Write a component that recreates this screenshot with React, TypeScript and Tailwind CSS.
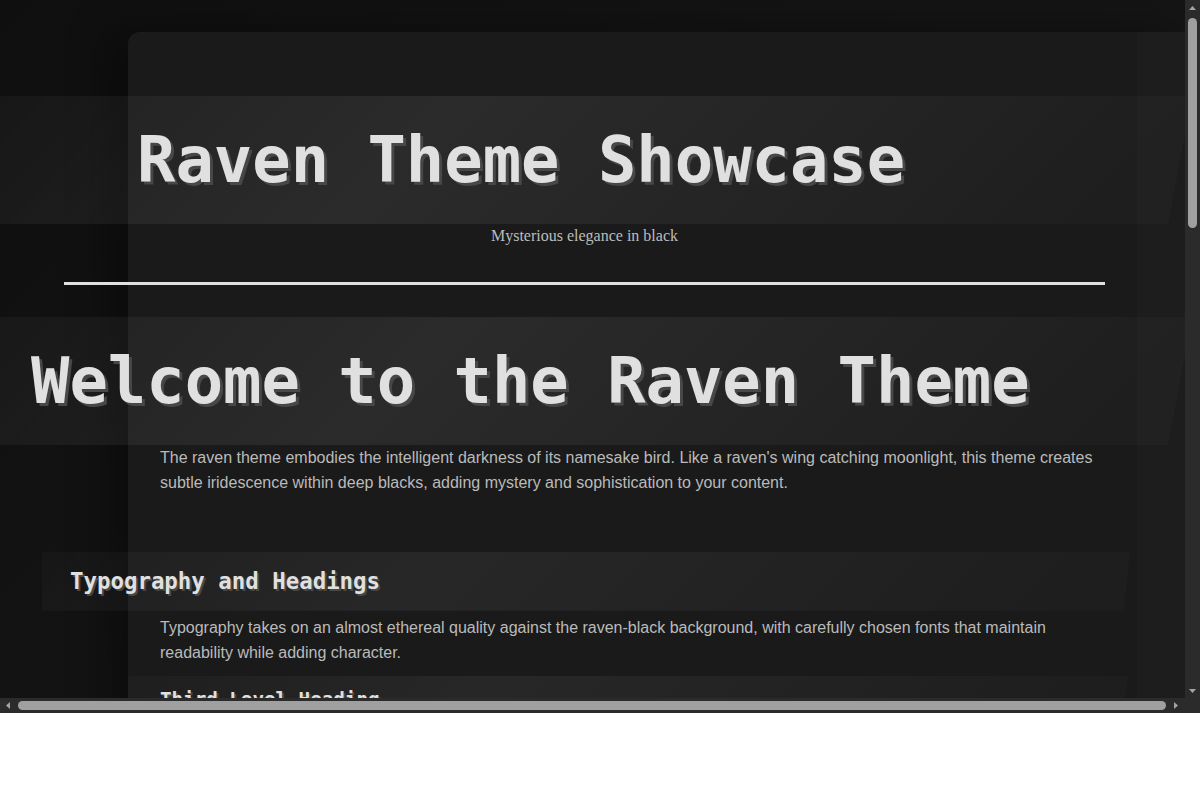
import React from "react";

const mono = "font-['DejaVu_Sans_Mono',monospace] font-bold text-[#e0e0e0]";
const para = "font-['Liberation_Sans',Arial,sans-serif] text-[16px] leading-[25px] text-[#bababa]";
const bandBig =
  "bg-[linear-gradient(135deg,rgba(255,255,255,0.03)_0%,rgba(255,255,255,0.075)_35%,rgba(255,255,255,0.02)_90%)]";
const bandSmall =
  "bg-[linear-gradient(135deg,rgba(255,255,255,0.02)_0%,rgba(255,255,255,0.06)_35%,rgba(255,255,255,0.015)_95%)]";

function P({ children, className = "" }: { children: React.ReactNode; className?: string }) {
  return <p className={`${para} ml-8 w-[945px] ${className}`}>{children}</p>;
}

function Arrow({ dir }: { dir: "up" | "down" | "left" | "right" }) {
  const pts =
    dir === "up"
      ? "0,4 3.5,0 7,4"
      : dir === "down"
      ? "0,0 7,0 3.5,4"
      : dir === "left"
      ? "4,0 4,7 0,3.5"
      : "0,0 0,7 4,3.5";
  const w = dir === "up" || dir === "down" ? 7 : 4;
  const h = dir === "up" || dir === "down" ? 4 : 7;
  return (
    <svg width={w} height={h} viewBox={`0 0 ${w} ${h}`}>
      <polygon points={pts} fill="#a3a3a3" />
    </svg>
  );
}

export default function App() {
  return (
    <div className="h-[713px] w-full flex flex-col bg-[#2b2b2b]">
      <div className="flex flex-1 min-h-0">
        {/* scrolling viewport */}
        <div className="w-[1185px] h-[698px] overflow-hidden bg-[linear-gradient(135deg,#0f0f0f_0%,#141414_50%,#171717_100%)]">
          <div className="w-[1192px] pt-8">
            <div className="ml-[128px] w-[1064px] rounded-tl-xl bg-[linear-gradient(to_right,#1a1a1a_0px,#1a1a1a_1009px,#1d1d1d_1009px)] shadow-[-20px_0_40px_rgba(0,0,0,0.35)] pt-16 pb-24">
              {/* header */}
              <h1
                className={`${mono} -ml-[128px] w-[1192px] pl-[137px] py-[25.6px] text-[63.8px] leading-[76.8px] [text-shadow:3px_3px_0_#474747] ${bandBig} [clip-path:polygon(0_0,100%_0,calc(100%-24px)_100%,0_100%)]`}
              >
                Raven Theme Showcase
              </h1>
              <div className="-ml-16 w-[1041px]">
                <p className="font-['Liberation_Serif',serif] text-[16px] leading-6 text-[#bdbdbd] text-center">
                  Mysterious elegance in black
                </p>
                <hr className="mt-[34px] border-0 h-[3px] bg-[#e0e0e0]" />
              </div>

              {/* content */}
              <h1
                className={`${mono} mt-8 -ml-[128px] w-[1192px] pl-[31px] py-[25.6px] text-[63.8px] leading-[76.8px] [text-shadow:3px_3px_0_#474747] ${bandBig} [clip-path:polygon(0_0,100%_0,calc(100%-24px)_100%,0_100%)]`}
              >
                Welcome to the Raven Theme
              </h1>
              <P>
                The raven theme embodies the intelligent darkness of its namesake bird. Like a raven's wing catching
                moonlight, this theme creates subtle iridescence within deep blacks, adding mystery and sophistication
                to your content.
              </P>

              <h2
                className={`${mono} mt-[57px] -ml-[86px] w-[1088px] pl-[28px] py-4 text-[22.4px] leading-[1.2] [text-shadow:2px_2px_0_#474747] ${bandSmall} [clip-path:polygon(0_0,100%_0,calc(100%-6px)_100%,0_100%)]`}
              >
                Typography and Headings
              </h2>
              <P className="mt-[4px]">
                Typography takes on an almost ethereal quality against the raven-black background, with carefully
                chosen fonts that maintain readability while adding character.
              </P>

              <h3
                className={`${mono} mt-[11px] w-[1000px] pl-8 py-[12px] text-[19.2px] leading-[1.2] [text-shadow:2px_2px_0_#474747] ${bandSmall} [clip-path:polygon(0_0,100%_0,calc(100%-6px)_100%,0_100%)]`}
              >
                Third Level Heading
              </h3>
              <P className="mt-2">
                Third level headings provide structure within sections, their shadows falling softly like feathers
                against the night.
              </P>

              <h2
                className={`${mono} mt-14 -ml-[86px] w-[1088px] pl-[28px] py-4 text-[22.4px] leading-[1.2] [text-shadow:2px_2px_0_#474747] ${bandSmall}`}
              >
                Lists and Structure
              </h2>
              <ul className={`${para} ml-8 mt-4 w-[945px] list-disc pl-8 space-y-2`}>
                <li>Deep black backgrounds with subtle gradients</li>
                <li>Silver-gray text that glows softly in the darkness</li>
                <li>Headings with layered shadows and iridescent bands</li>
              </ul>
            </div>
          </div>
        </div>
        {/* vertical scrollbar */}
        <div className="w-[15px] h-[698px] bg-[#2b2b2b] flex flex-col items-center">
          <div className="h-[15px] flex items-center justify-center">
            <Arrow dir="up" />
          </div>
          <div className="mt-[3px] w-[9px] h-[210px] rounded-full bg-[#a0a0a0]" />
          <div className="flex-1" />
          <div className="h-[15px] flex items-center justify-center">
            <Arrow dir="down" />
          </div>
        </div>
      </div>
      {/* horizontal scrollbar */}
      <div className="h-[15px] flex">
        <div className="w-[1185px] h-[15px] bg-[#2b2b2b] flex items-center">
          <div className="w-[15px] flex items-center justify-center">
            <Arrow dir="left" />
          </div>
          <div className="ml-[3px] w-[1148px] h-[9px] rounded-full bg-[#a0a0a0]" />
          <div className="flex-1 flex items-center justify-center">
            <Arrow dir="right" />
          </div>
        </div>
        <div className="w-[15px] h-[15px] bg-[#2b2b2b]" />
      </div>
    </div>
  );
}
